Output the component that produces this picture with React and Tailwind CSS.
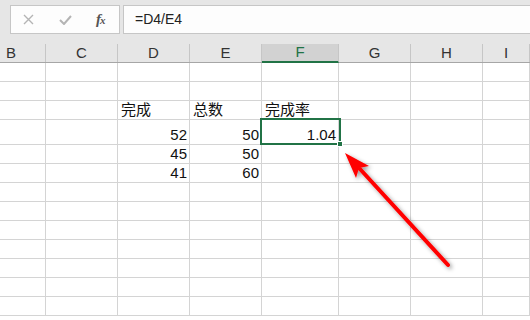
import React from "react";

const cols = [
  { name: "B", w: "w-[46px]" },
  { name: "C", w: "w-[72px]" },
  { name: "D", w: "w-[72px]" },
  { name: "E", w: "w-[72px]" },
  { name: "F", w: "w-[77px]" },
  { name: "G", w: "w-[72px]" },
  { name: "H", w: "w-[72px]" },
  { name: "I", w: "flex-1" },
];

const rowHeights = ["h-[19px]", "h-[19px]", "h-[19px]", "h-[25px]", "h-[19px]", "h-[19px]", "h-[19px]", "h-[19px]", "h-[19px]", "h-[19px]", "h-[19px]", "h-[19px]", "h-[19px]"];

const data = {
  2: { D: { t: "完成", a: "l" }, E: { t: "总数", a: "l" }, F: { t: "完成率", a: "l" } },
  3: { D: { t: "52", a: "r" }, E: { t: "50", a: "r" }, F: { t: "1.04", a: "r" } },
  4: { D: { t: "45", a: "r" }, E: { t: "50", a: "r" } },
  5: { D: { t: "41", a: "r" }, E: { t: "60", a: "r" } },
};

const font = { fontFamily: '"Liberation Sans", "Noto Sans CJK SC", sans-serif' };

export default function App() {
  return (
    <div className="relative w-[530px] h-[320px] overflow-hidden bg-white" style={font}>
      {/* formula bar */}
      <div className="h-[44px] bg-[#e6e6e6] flex items-start pt-[5px] pl-[10px] gap-[3px]">
        <div className="w-[110px] h-[29px] bg-[#fdfdfd] border border-[#c6c6c6] flex items-center">
          <svg className="ml-[12px]" width="11" height="11" viewBox="0 0 11 11">
            <path d="M1 1 L10 10 M10 1 L1 10" stroke="#b4b4b4" strokeWidth="1.4" fill="none" />
          </svg>
          <svg className="ml-[25px]" width="13" height="10" viewBox="0 0 13 10">
            <path d="M1 5 L5 9 L12 1" stroke="#b4b4b4" strokeWidth="2" fill="none" />
          </svg>
          <span className="ml-[24px] text-[15px] italic font-bold text-[#555] leading-none tracking-[-1px]" style={{ fontFamily: '"Liberation Serif", serif' }}>
            f<span className="text-[11px]">x</span>
          </span>
        </div>
        <div className="flex-1 h-[29px] bg-[#fdfdfd] border border-r-0 border-[#c6c6c6] flex items-center pl-[11px] text-[14px] text-[#222]">
          =D4/E4
        </div>
      </div>
      {/* column header */}
      <div className="flex h-[19px] bg-[#e6e6e6] border-b border-[#a6a6a6]">
        {cols.map((c) => (
          <div
            key={c.name}
            className={`${c.w} shrink-0 flex items-center justify-center text-[15px] border-r border-[#c6c6c6] ${c.name === "F" ? "bg-[#d2d2d2] text-[#217346] border-b-2 border-b-[#217346] -mb-px" : "text-[#333]"} ${c.name === "B" ? "justify-start pl-[6px]" : ""}`}
          >
            {c.name}
          </div>
        ))}
      </div>
      {/* grid */}
      {rowHeights.map((h, ri) => (
        <div key={ri} className={`flex ${h} border-b border-[#d4d4d4]`}>
          {cols.map((c) => {
            const cell = data[ri] && data[ri][c.name];
            return (
              <div
                key={c.name}
                className={`${c.w} shrink-0 border-r border-[#d4d4d4] flex items-end text-[15px] leading-[18px] text-[#111] ${cell && cell.a === "r" ? "justify-end pr-[2px]" : "pl-[3px]"}`}
              >
                {cell ? cell.t : null}
              </div>
            );
          })}
        </div>
      ))}
      {/* selection */}
      <div className="absolute left-[260px] top-[118px] w-[81px] h-[27px] border-2 border-[#217346] pointer-events-none" />
      <div className="absolute left-[337px] top-[141px] w-[6px] h-[6px] bg-[#217346] border border-white" />
      {/* arrow */}
      <svg className="absolute inset-0" width="530" height="320" viewBox="0 0 530 320">
        <defs>
          <filter id="sh" x="-20%" y="-20%" width="140%" height="140%">
            <feDropShadow dx="2" dy="2" stdDeviation="2" floodColor="#000" floodOpacity="0.4" />
          </filter>
        </defs>
        <g filter="url(#sh)">
          <line x1="448" y1="265" x2="360" y2="169" stroke="#ff0000" strokeWidth="4" strokeLinecap="round" />
          <polygon points="345,153 369,166 359,168 356,178" fill="#ff0000" />
        </g>
      </svg>
    </div>
  );
}
